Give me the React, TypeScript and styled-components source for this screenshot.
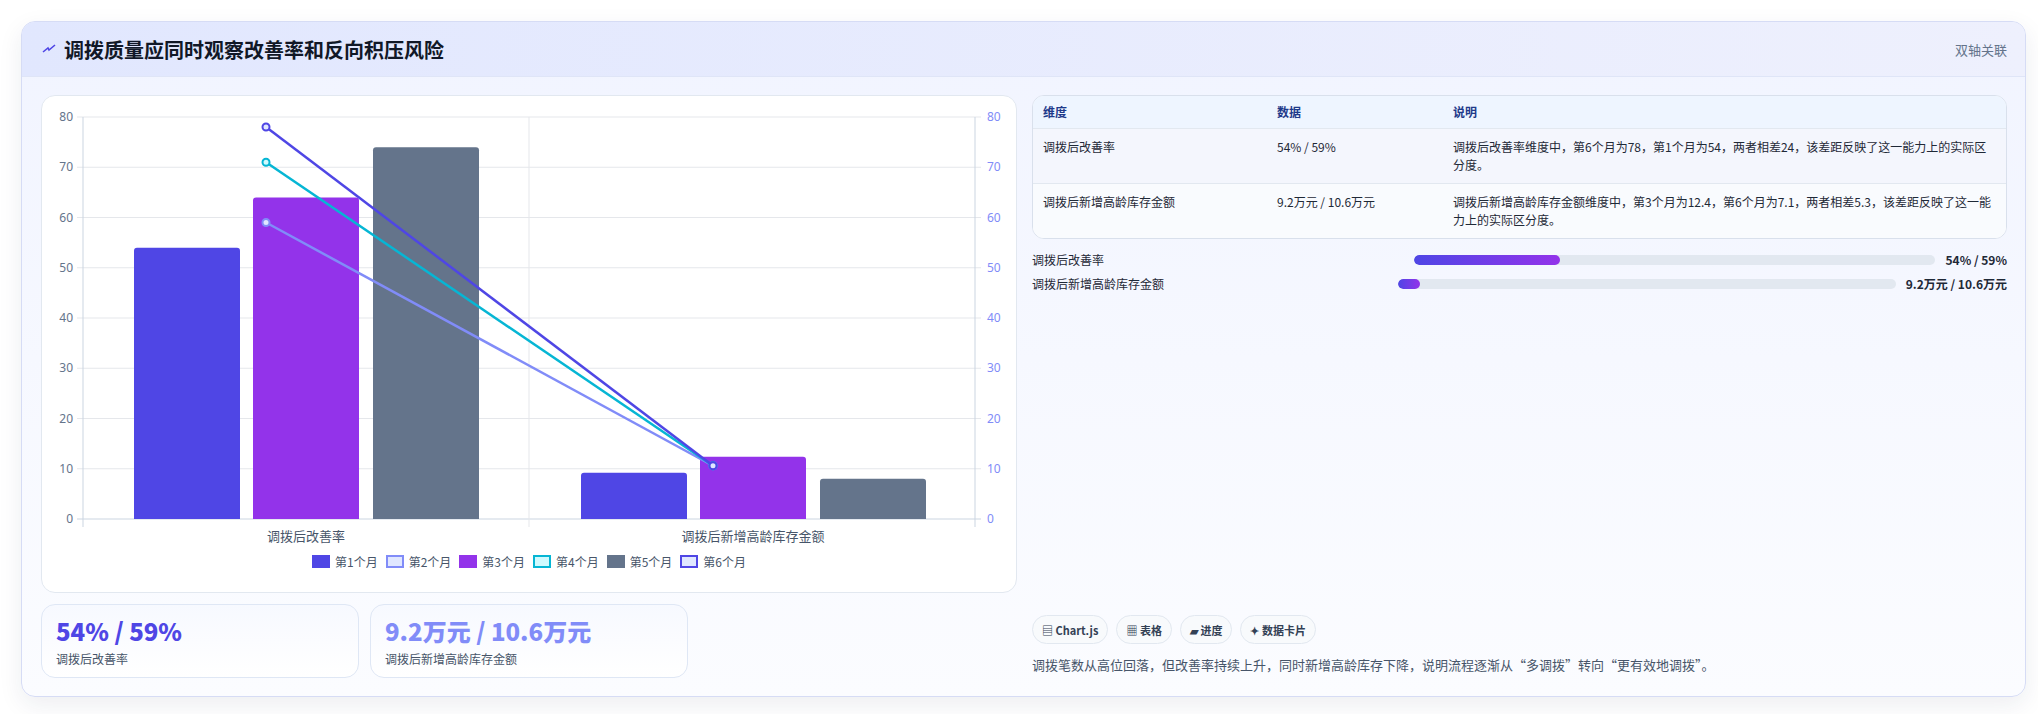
import React from "react";
import styled, { createGlobalStyle } from "styled-components";

const Global = createGlobalStyle`
  body { margin: 0; background: #fff; font-family: "Noto Sans CJK SC", "Noto Sans", sans-serif; }
  * { box-sizing: border-box; }
`;

const Page = styled.div`
  padding: 21px 12px 18px 21px;
`;
const Card = styled.div`
  border: 1px solid #d6dcf5;
  border-radius: 14px;
  overflow: hidden;
  background: linear-gradient(180deg, #f1f4ff 0%, #fbfcff 100%);
  box-shadow: 0 8px 24px rgba(30, 41, 80, 0.08);
`;
const Header = styled.div`
  height: 55px;
  display: flex;
  align-items: center;
  justify-content: space-between;
  padding: 0 18px 0 20px;
  background: linear-gradient(90deg, #e1e7fe 0%, #eef0fd 100%);
  border-bottom: 1px solid #dfe5f7;
`;
const Title = styled.h1`
  margin: 0;
  font-size: 20px;
  font-weight: 700;
  color: #111827;
  display: flex;
  align-items: center;
  gap: 8px;
`;
const Sub = styled.span`
  font-size: 13px;
  color: #64748b;
`;
const Body = styled.div`
  display: grid;
  grid-template-columns: 976px 1fr;
  gap: 15px;
  padding: 18px 18px 18px 19px;
`;
const Col = styled.div`
  display: flex;
  flex-direction: column;
`;
const ChartPanel = styled.div`
  height: 498px;
  background: #fff;
  border: 1px solid #e2e8f0;
  border-radius: 14px;
  display: flex;
  flex-direction: column;
`;
const Legend = styled.div`
  display: flex;
  justify-content: center;
  gap: 8px;
  font-size: 12px;
  color: #475569;
  margin-top: 2px;
`;
const LegItem = styled.div`
  display: flex;
  align-items: center;
  gap: 5px;
`;
const Swatch = styled.span<{ $fill: string; $border: string }>`
  width: 18px;
  height: 13px;
  background: ${(p) => p.$fill};
  border: 2px solid ${(p) => p.$border};
`;
const KpiRow = styled.div`
  display: flex;
  gap: 11px;
  margin-top: 11px;
`;
const Kpi = styled.div`
  width: 318px;
  height: 74px;
  border: 1px solid #dfe7f5;
  border-radius: 14px;
  background: linear-gradient(180deg, #f7f9ff, #ffffff);
  padding: 10px 14px;
`;
const KpiValue = styled.div<{ $c: string }>`
  font-size: 24px;
  font-weight: 800;
  color: ${(p) => p.$c};
  line-height: 32px;
`;
const KpiLabel = styled.div`
  font-size: 12px;
  color: #475569;
  margin-top: 3px;
`;
const Table = styled.div`
  border: 1px solid #d9e0ec;
  border-radius: 12px;
  overflow: hidden;
  background: #fff;
  font-size: 12px;
  color: #1f2937;
`;
const TRow = styled.div<{ $head?: boolean; $alt?: boolean }>`
  display: grid;
  grid-template-columns: 234px 176px 1fr;
  padding: ${(p) => (p.$head ? "7px 10px" : "9px 10px")};
  background: ${(p) => (p.$head ? "#eef5ff" : p.$alt ? "#f9fbfe" : "#f4f6fd")};
  border-top: ${(p) => (p.$head ? "none" : "1px solid #e2e8f0")};
  color: ${(p) => (p.$head ? "#1e3a8a" : "#1f2937")};
  font-weight: ${(p) => (p.$head ? 600 : 400)};
  line-height: 18px;
  min-height: ${(p) => (p.$head ? "31px" : "54px")};
`;
const Bars = styled.div`
  display: flex;
  flex-direction: column;
  gap: 7px;
  margin-top: 12px;
`;
const BarRow = styled.div`
  display: flex;
  align-items: center;
  gap: 10px;
  font-size: 12px;
  color: #1f2937;
`;
const BarLabel = styled.div`
  flex: 1 1 0;
`;
const Track = styled.div`
  flex: 1.4 1 0;
  height: 10px;
  border-radius: 5px;
  background: #e2e8f0;
  overflow: hidden;
`;
const Fill = styled.div`
  height: 100%;
  border-radius: 5px;
  background: linear-gradient(90deg, #4f46e5, #9333ea);
`;
const BarValue = styled.div`
  font-weight: 700;
`;
const Bottom = styled.div`
  margin-top: auto;
`;
const Chips = styled.div`
  display: flex;
  gap: 8px;
`;
const Chip = styled.span`
  height: 29px;
  padding: 0 9px;
  display: inline-flex;
  align-items: center;
  gap: 4px;
  border: 1px solid #e2e8f0;
  border-radius: 15px;
  background: #f8fafc;
  font-size: 11px;
  font-weight: 700;
  color: #334155;
`;
const Note = styled.p`
  margin: 11px 0 4px;
  font-size: 13px;
  color: #475569;
`;

const X0 = 41, X1 = 933, Y0 = 423, K = 5.025;
const y = (v: number) => Y0 - v * K;
const centers = [264, 711];
const bars = [
  { c: "#4f46e5", v: [54, 9.2], off: -172 },
  { c: "#9333ea", v: [64, 12.4], off: -53 },
  { c: "#64748b", v: [74, 8], off: 67 },
];
const lines = [
  { c: "#818cf8", v: [59, 10.6] },
  { c: "#06b6d4", v: [71, 10.6] },
  { c: "#4f46e5", v: [78, 10.6] },
];

function Chart() {
  const ticks = [0, 10, 20, 30, 40, 50, 60, 70, 80];
  return (
    <svg width="974" height="455" style={{ display: "block" }}>
      {ticks.map((t) => (
        <g key={t}>
          <line x1={X0 - 6} x2={X1 + 6} y1={y(t)} y2={y(t)} stroke={t === 0 ? "#cbd5e1" : "#e5e7eb"} />
          <text x={X0 - 10} y={y(t) + 4} textAnchor="end" fontSize="12" fill="#64748b" fontFamily="Noto Sans">{t}</text>
          <text x={X1 + 12} y={y(t) + 4} fontSize="12" fill="#818cf8" fontFamily="Noto Sans">{t}</text>
        </g>
      ))}
      {[X0, 487, X1].map((x) => (
        <line key={x} x1={x} x2={x} y1={y(80)} y2={Y0 + 8} stroke={x === 487 ? "#e5e7eb" : "#cbd5e1"} />
      ))}
      {bars.map((b) =>
        b.v.map((v, i) => (
          <path key={b.c + i} fill={b.c}
            d={`M${centers[i] + b.off} ${Y0} V${y(v) + 3} q0 -3 3 -3 H${centers[i] + b.off + 103} q3 0 3 3 V${Y0} Z`} />
        ))
      )}
      {lines.map((l) => (
        <g key={l.c}>
          <line x1={centers[0] - 40} y1={y(l.v[0])} x2={centers[1] - 40} y2={y(l.v[1])} stroke={l.c} strokeWidth="2.5" />
          {l.v.map((v, i) => (
            <circle key={i} cx={centers[i] - 40} cy={y(v)} r="3.5" fill={l.c === "#06b6d4" ? "#cffafe" : "#e0e7ff"} stroke={l.c} strokeWidth="2" />
          ))}
        </g>
      ))}
      <text x={centers[0]} y={445} textAnchor="middle" fontSize="13" fill="#475569">调拨后改善率</text>
      <text x={centers[1]} y={445} textAnchor="middle" fontSize="13" fill="#475569">调拨后新增高龄库存金额</text>
    </svg>
  );
}

const legend = [
  { n: "第1个月", f: "#4f46e5", b: "#4f46e5" },
  { n: "第2个月", f: "#e0e7ff", b: "#818cf8" },
  { n: "第3个月", f: "#9333ea", b: "#9333ea" },
  { n: "第4个月", f: "#cffafe", b: "#06b6d4" },
  { n: "第5个月", f: "#64748b", b: "#64748b" },
  { n: "第6个月", f: "#e0e7ff", b: "#4f46e5" },
];

export default function App() {
  return (
    <Page>
      <Global />
      <Card>
        <Header>
          <Title>
            <svg width="14" height="10" viewBox="0 0 14 10"><path d="M1 8 L6 4 L7 6 L13 1" stroke="#4f46e5" strokeWidth="1.6" fill="none" /></svg>
            调拨质量应同时观察改善率和反向积压风险
          </Title>
          <Sub>双轴关联</Sub>
        </Header>
        <Body>
          <Col>
            <ChartPanel>
              <Chart />
              <Legend>
                {legend.map((l) => (
                  <LegItem key={l.n}><Swatch $fill={l.f} $border={l.b} />{l.n}</LegItem>
                ))}
              </Legend>
            </ChartPanel>
            <KpiRow>
              <Kpi><KpiValue $c="#4f46e5">54% / 59%</KpiValue><KpiLabel>调拨后改善率</KpiLabel></Kpi>
              <Kpi><KpiValue $c="#818cf8">9.2万元 / 10.6万元</KpiValue><KpiLabel>调拨后新增高龄库存金额</KpiLabel></Kpi>
            </KpiRow>
          </Col>
          <Col>
            <Table>
              <TRow $head><span>维度</span><span>数据</span><span>说明</span></TRow>
              <TRow><span>调拨后改善率</span><span>54% / 59%</span><span>调拨后改善率维度中，第6个月为78，第1个月为54，两者相差24，该差距反映了这一能力上的实际区分度。</span></TRow>
              <TRow $alt><span>调拨后新增高龄库存金额</span><span>9.2万元 / 10.6万元</span><span>调拨后新增高龄库存金额维度中，第3个月为12.4，第6个月为7.1，两者相差5.3，该差距反映了这一能力上的实际区分度。</span></TRow>
            </Table>
            <Bars>
              <BarRow><BarLabel>调拨后改善率</BarLabel><Track><Fill style={{ width: "28%" }} /></Track><BarValue>54% / 59%</BarValue></BarRow>
              <BarRow><BarLabel>调拨后新增高龄库存金额</BarLabel><Track><Fill style={{ width: "4.5%" }} /></Track><BarValue>9.2万元 / 10.6万元</BarValue></BarRow>
            </Bars>
            <Bottom>
              <Chips>
                <Chip>▤ Chart.js</Chip>
                <Chip>▦ 表格</Chip>
                <Chip>▰ 进度</Chip>
                <Chip>✦ 数据卡片</Chip>
              </Chips>
              <Note>调拨笔数从高位回落，但改善率持续上升，同时新增高龄库存下降，说明流程逐渐从“多调拨”转向“更有效地调拨”。</Note>
            </Bottom>
          </Col>
        </Body>
      </Card>
    </Page>
  );
}
